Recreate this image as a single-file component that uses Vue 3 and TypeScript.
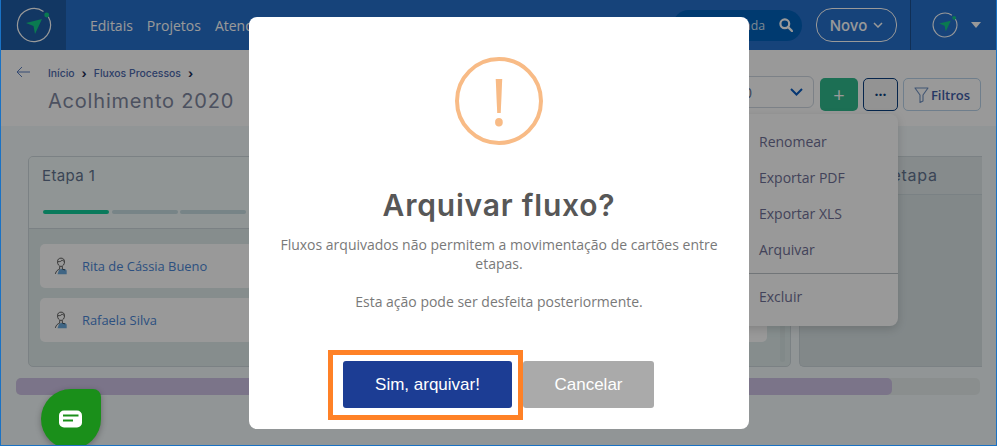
<template>
  <div class="shell">
    <header class="topbar">
      <div class="logo-box">
        <svg width="36" height="36" viewBox="0 0 36 36" fill="none">
          <path d="M27.500 4.500A16.500 16.500 0 1 0 32.300 9.750" stroke="#fff" stroke-width="1.200" />
          <circle cx="30.700" cy="8" r="2.400" fill="#12cc85" />
          <path d="M10 16 26 12l-7 15-1.500-8z" fill="#12cc85" />
        </svg>
      </div>
      <nav class="nav">
        <a v-for="item in navItems" :key="item">{{ item }}</a>
      </nav>
      <div class="top-right">
        <div class="search">
          <span>Busca avançada</span>
          <svg width="14" height="14" viewBox="0 0 14 14" fill="none">
            <circle cx="5.800" cy="5.800" r="4.400" stroke="#fff" stroke-width="2.200" />
            <path d="m9 9 4 4" stroke="#fff" stroke-width="2.400" stroke-linecap="round" />
          </svg>
        </div>
        <button class="novo">
          Novo
          <svg width="10" height="6" viewBox="0 0 10 6" fill="none">
            <path d="m1 1 4 4 4-4" stroke="#fff" stroke-width="1.500" />
          </svg>
        </button>
        <div class="user">
          <svg width="26" height="26" viewBox="0 0 36 36" fill="none">
            <path d="M27.500 4.500A16.500 16.500 0 1 0 32.300 9.750" stroke="#fff" stroke-width="1.500" />
            <circle cx="30.700" cy="8" r="2.600" fill="#12cc85" />
            <path d="M10 16 26 12l-7 15-1.500-8z" fill="#12cc85" />
          </svg>
          <span class="caret"></span>
        </div>
      </div>
    </header>

    <section class="subbar">
      <svg class="back" width="14" height="12" viewBox="0 0 14 12" fill="none">
        <path d="M6 1 1 6l5 5M1 6h13" stroke="#5b7fc0" stroke-width="1" />
      </svg>
      <div class="heading">
        <div class="crumbs">
          <span>Início</span><b>›</b><span>Fluxos Processos</span><b>›</b>
        </div>
        <h1>Acolhimento 2020</h1>
      </div>
      <div class="actions">
        <div class="select">
          <span>Acolhimento 2020</span>
          <svg width="13" height="8" viewBox="0 0 13 8" fill="none">
            <path d="m1 1 5.500 5.500L12 1" stroke="#0a5cc0" stroke-width="2" />
          </svg>
        </div>
        <button class="add">+</button>
        <button class="more">···</button>
        <button class="filter">
          <svg width="15" height="16" viewBox="0 0 15 16" fill="none">
            <path d="M1 1h13L9 8v6l-3 1.500V8z" stroke="#6d8fc0" stroke-width="1.100" stroke-linejoin="round" />
          </svg>
          Filtros
        </button>
        <div class="menu">
          <a v-for="item in menuItems" :key="item">{{ item }}</a>
          <hr />
          <a>Excluir</a>
        </div>
      </div>
    </section>

    <main class="board">
      <div class="columns">
        <div v-for="(col, i) in columns" :key="i" class="column">
          <div class="col-head">
            <div class="col-title">{{ col.title }}</div>
            <div class="steps">
              <i v-for="n in 3" :key="n" :class="{ done: n === 1 }"></i>
            </div>
          </div>
          <div class="col-body">
            <div class="cards">
              <div v-for="(name, j) in col.people" :key="j" class="card">
                <template v-if="name">
                  <svg width="14" height="20" viewBox="0 0 16 21" fill="none">
                    <path d="M5 17c0-1.500 1-2.500 3-3h4c1.500.300 2.500 1 2.500 2.500V20H4z" fill="#6aa9dc" />
                    <path d="M8 1.500c-2.500 0-4 1.600-4 4 0 2.800 1.500 5.500 4 5.500s4-2.700 4-5.500c0-2.400-1.500-4-4-4zM4.500 5.500c2 .3 4-.3 5-2 .5 1 1.500 1.700 2.300 2M6.500 11v3c-2 .6-4 2-5 5.500M9.500 11v3l3 1" stroke="#333" stroke-width=".9" />
                  </svg>
                  <span>{{ name }}</span>
                </template>
              </div>
            </div>
            <div class="col-scroll"></div>
          </div>
        </div>
        <div class="column new-col">
          <div class="new-head">Nova etapa</div>
        </div>
      </div>
      <div class="hscroll"><div class="thumb"></div></div>
    </main>

    <div class="backdrop">
      <div class="dialog">
        <div class="warn">!</div>
        <h2>Arquivar fluxo?</h2>
        <p>
          Fluxos arquivados não permitem a movimentação de cartões entre etapas.<br /><br />
          Esta ação pode ser desfeita posteriormente.
        </p>
        <div class="buttons">
          <div class="mark">
            <button class="confirm">Sim, arquivar!</button>
          </div>
          <button class="cancel">Cancelar</button>
        </div>
      </div>
    </div>

    <div class="chat">
      <svg width="24" height="18" viewBox="0 0 24 18">
        <rect width="23" height="17" y="0.500" rx="5" fill="#fff" />
        <path d="M4 5.500h15.500M4 10.500h10" stroke="#1a8f1a" stroke-width="2" />
      </svg>
    </div>
  </div>
</template>

<script setup lang="ts">
type Column = {
  title: string
  people: string[]
}

const navItems: string[] = ['Editais', 'Projetos', 'Atendimentos']
const menuItems: string[] = ['Renomear', 'Exportar PDF', 'Exportar XLS', 'Arquivar']

// only the first column is readable, the other two sit behind the dialog
const columns: Column[] = [
  { title: 'Etapa 1', people: ['Rita de Cássia Bueno', 'Rafaela Silva'] },
  { title: '', people: ['', ''] },
  { title: '', people: ['', ''] }
]
</script>

<style>
body {
  margin: 0;
  overflow: hidden;
}
</style>

<style scoped>
.shell {
  position: relative;
  box-sizing: border-box;
  width: 997px;
  height: 446px;
  overflow: hidden;
  border: solid #1a72c4;
  border-width: 0 1px 1px 1px;
  background: #f2f8fa;
  font-family: "Open Sans", sans-serif;
}
button {
  font-family: inherit;
  cursor: pointer;
}

/* top bar */
.topbar {
  display: flex;
  align-items: center;
  height: 50px;
  background: #2670cb;
  color: #fff;
}
.logo-box {
  display: flex;
  align-items: center;
  justify-content: center;
  width: 65px;
  height: 50px;
  background: #1e5ca5;
}
.nav {
  display: flex;
  gap: 14px;
  padding-left: 24px;
  font-size: 14px;
}
.top-right {
  display: flex;
  align-items: center;
  margin-left: auto;
  height: 50px;
}
.search {
  display: flex;
  align-items: center;
  justify-content: flex-end;
  gap: 14px;
  box-sizing: border-box;
  width: 129px;
  height: 31px;
  padding-right: 9px;
  border-radius: 16px;
  background: #0061bb;
  font-size: 12.300px;
  white-space: nowrap;
  color: #cfe0f2;
}
.search svg {
  flex: none;
}
.novo {
  display: flex;
  align-items: center;
  justify-content: center;
  gap: 6px;
  box-sizing: border-box;
  width: 81px;
  height: 34px;
  margin-left: 14px;
  border: 1px solid #fff;
  border-radius: 16px;
  background: transparent;
  color: #fff;
  font-family: Inter, sans-serif;
  font-size: 15px;
  font-weight: 500;
}
.user {
  display: flex;
  align-items: center;
  gap: 13px;
  box-sizing: border-box;
  width: 86px;
  height: 50px;
  margin-left: 13px;
  padding-left: 21px;
  border-left: 1px solid #1b4f8f;
}
.caret {
  border: 5px solid transparent;
  border-top: 6px solid #fff;
  border-bottom: 0;
}

/* sub bar */
.subbar {
  display: flex;
  height: 76px;
  background: #fff;
}
.back {
  margin: 16px 0 0 15px;
}
.heading {
  margin-left: 18px;
  padding-top: 18px;
}
.crumbs {
  display: flex;
  align-items: center;
  gap: 7px;
  font-family: Inter, sans-serif;
  font-size: 10.400px;
  font-weight: 500;
  line-height: 12px;
  color: #4d69ad;
}
.crumbs b {
  color: #1b2c52;
  font-size: 12px;
}
h1 {
  margin: 9px 0 0;
  font-family: Inter, sans-serif;
  font-size: 20px;
  font-weight: 400;
  line-height: 24px;
  letter-spacing: 0.8px;
  color: #7f88a0;
}
.actions {
  position: relative;
  display: flex;
  align-items: flex-start;
  margin-left: auto;
  padding: 26px 15px 0 0;
}
.select {
  display: flex;
  align-items: center;
  justify-content: flex-end;
  gap: 38px;
  box-sizing: border-box;
  width: 200px;
  height: 32px;
  padding: 0 10px 0 12px;
  border: 1px solid #cfd8e2;
  border-radius: 6px;
  font-size: 14px;
  white-space: nowrap;
  color: #60708f;
}
.add {
  width: 38px;
  height: 33px;
  margin: 2px 0 0 6px;
  border: 0;
  border-radius: 5px;
  background: #2fb98c;
  color: #fff;
  font-size: 20px;
  line-height: 20px;
}
.more {
  width: 35px;
  height: 33px;
  margin: 2px 0 0 5px;
  padding: 0;
  border: 1px solid #0a3f7f;
  border-radius: 5px;
  background: #f5f5f5;
  color: #0a3f7f;
  font-size: 14px;
  font-weight: 700;
}
.filter {
  display: flex;
  align-items: center;
  justify-content: center;
  gap: 2px;
  box-sizing: border-box;
  width: 78px;
  height: 33px;
  margin: 2px 0 0 5px;
  padding: 0;
  border: 1px solid #b9d3ea;
  border-radius: 5px;
  background: #fff;
  color: #3f5ea8;
  font-size: 13px;
  font-weight: 600;
}
.menu {
  position: absolute;
  top: 64px;
  right: 98px;
  z-index: 2;
  box-sizing: border-box;
  width: 180px;
  height: 212px;
  padding-top: 10px;
  border-radius: 8px;
  background: #fff;
  box-shadow: 0 3px 10px rgba(0, 0, 0, 0.16);
  font-size: 14px;
  color: #6f7096;
}
.menu a {
  display: block;
  height: 36px;
  padding-left: 41px;
  line-height: 36px;
}
.menu hr {
  margin: 5px 0 0;
  border: 0;
  border-top: 1px solid #bcc4c8;
}
.menu hr + a {
  margin-top: 5px;
}

/* board */
.board {
  padding-top: 30px;
}
.columns {
  display: flex;
  gap: 8px;
  width: 953px;
  height: 211px;
  margin-left: 27px;
}
.column {
  box-sizing: border-box;
  flex: none;
  width: 249px;
  overflow: hidden;
  border: 1px solid #ced8dc;
  border-radius: 5px;
  background: #dfecec;
}
.col-head {
  height: 72px;
  box-sizing: border-box;
  padding: 9px 13px 0 14px;
  border-bottom: 1px solid #ced8dc;
  background: #f0f8f8;
}
.col-title {
  height: 20px;
  margin-left: -1px;
  font-family: Inter, sans-serif;
  font-size: 15px;
  line-height: 20px;
  letter-spacing: 0.4px;
  color: #63748f;
}
.steps {
  display: flex;
  gap: 2.500px;
  margin-top: 24px;
}
.steps i {
  width: 66px;
  height: 4px;
  border-radius: 2px;
  background: #c6dce1;
}
.steps i.done {
  background: #12cc99;
}
.col-body {
  display: flex;
  gap: 13px;
  padding: 15px 0 0 11px;
}
.cards {
  display: flex;
  flex-direction: column;
  gap: 10px;
  width: 213px;
  flex: none;
}
.card {
  display: flex;
  align-items: center;
  gap: 14px;
  height: 44px;
  padding-left: 14px;
  border-radius: 5px;
  background: #fff;
  font-size: 12.900px;
  white-space: nowrap;
  color: #4a86d6;
}
.col-scroll {
  width: 5px;
  height: 118px;
  border-radius: 3px;
  background: #d8e4e4;
}
.new-col {
  width: 183px;
  border-right: 0;
  border-radius: 5px 0 0 5px;
  background: #d9e3e5;
}
.new-head {
  height: 37px;
  border-bottom: 1px solid #ccd8dc;
  background: #e0e8ea;
  font-family: Inter, sans-serif;
  font-size: 16px;
  line-height: 37px;
  letter-spacing: 0.7px;
  text-align: center;
  color: #63748f;
}
.hscroll {
  width: 964px;
  height: 17px;
  margin: 11px 0 0 15px;
  border-radius: 5px;
  background: #e6eded;
}
.thumb {
  width: 876px;
  height: 17px;
  border-radius: 5px;
  background: #cdc2e4;
}

/* dialog */
.backdrop {
  position: absolute;
  inset: 0 -1px -1px -1px;
  z-index: 5;
  background: rgba(0, 0, 0, 0.4);
}
.dialog {
  box-sizing: border-box;
  width: 500px;
  height: 412px;
  margin: 17px 0 0 249px;
  padding-top: 40px;
  border-radius: 8px;
  background: #fff;
  text-align: center;
}
.warn {
  box-sizing: border-box;
  width: 88px;
  height: 88px;
  margin: 0 auto;
  border: 4px solid #f8bb86;
  border-radius: 50%;
  font-size: 66px;
  font-weight: 400;
  line-height: 78px;
  color: #f8bb86;
}
h2 {
  margin: 40px 0 0;
  font-family: Inter, sans-serif;
  font-size: 30px;
  font-weight: 600;
  line-height: 40px;
  letter-spacing: 0.8px;
  color: #575757;
}
p {
  margin: 10px 0 0;
  padding: 0 20px;
  font-size: 14px;
  line-height: 19px;
  color: #797979;
}
.buttons {
  display: flex;
  align-items: flex-start;
  margin: 39px 0 0 79px;
}
.mark {
  display: flex;
  padding: 6px 6px 7px 10px;
  border: 5px solid #ff8126;
}
.buttons button {
  height: 47px;
  border: 0;
  border-radius: 3px;
  color: #fff;
  font-family: "Liberation Sans", sans-serif;
  font-size: 17px;
}
.confirm {
  width: 169px;
  background: #1c3d94;
}
.buttons .cancel {
  width: 131px;
  margin-top: 11px;
  background: #aaa;
}

/* chat */
.chat {
  position: absolute;
  top: 389px;
  left: 40px;
  z-index: 6;
  display: flex;
  align-items: center;
  justify-content: center;
  width: 60px;
  height: 60px;
  border-radius: 50% 8px 50% 50%;
  background: #1a8f1a;
  box-shadow: 0 2px 6px rgba(0, 0, 0, 0.3);
}
</style>
